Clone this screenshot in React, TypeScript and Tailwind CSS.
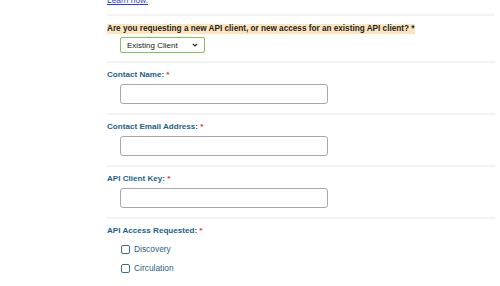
import * as React from 'react'

const font = { fontFamily: '"Liberation Sans", Arial, sans-serif' }

const Req: React.FunctionComponent = () => <span className="text-[#d33a35]"> *</span>

const TextField: React.FunctionComponent<{ label: string }> = ({ label }) => {
  return (
    <div className="border-t-2 border-[#f3f3f3] pt-[6px] pb-[9px]">
      <label className="block h-[12px] text-[8.1px] font-bold leading-[12px] text-[#225f8c]">
        {label}
        <Req />
      </label>
      <input
        type="text"
        className="mt-[3px] ml-[13px] block h-[20px] w-[208px] rounded-[3px] border-[1.5px] border-[#a8a8a8] bg-white px-1 text-[8px] outline-none"
      />
    </div>
  )
}

const Check: React.FunctionComponent<{ label: string }> = ({ label }) => {
  return (
    <label className="ml-[14px] flex h-[12px] items-center gap-[4px] text-[8.4px] leading-[12px] text-[#2b5f86]">
      <span className="block h-[9px] w-[9px] rounded-[2px] border-[1.5px] border-[#3d6d93] bg-white" />
      {label}
    </label>
  )
}

export default function App() {
  return (
    <div className="h-[286px] w-[500px] overflow-hidden bg-white" style={font}>
      <div className="ml-[107px] w-[388px]">
        <div className="h-[14px] overflow-hidden">
          <a href="#" className="block -translate-y-[5px] text-[8.4px] leading-[10px] text-[#2f3fd0] underline">
            Learn how.
          </a>
        </div>

        <div className="border-t-2 border-[#f3f3f3] pt-[8px] pb-[8px]">
          <div className="flex h-[10px] text-[8.2px] leading-[10px]">
            <span className="block h-[10px] bg-[#fde4bd] pr-[1px] font-bold text-[#1e1e1e]">
              Are you requesting a new API client, or new access for an existing API client? *
            </span>
          </div>
          <div className="relative mt-[3px] ml-[13px] h-[16px] w-[85px]">
            <select
              defaultValue="existing"
              className="block h-[16px] w-[85px] appearance-none rounded-[2px] border-[1.5px] border-[#7ec35b] bg-white pl-[6px] text-[8px] leading-[13px] text-[#222] outline-none"
            >
              <option value="new">New Client</option>
              <option value="existing">Existing Client</option>
            </select>
            <svg
              className="pointer-events-none absolute top-[6px] right-[7px]"
              width="6"
              height="4"
              viewBox="0 0 6 4"
              fill="none"
            >
              <path d="M0.8 0.8 L3 3 L5.2 0.8" stroke="#222" strokeWidth="1.2" />
            </svg>
          </div>
        </div>

        <TextField label="Contact Name:" />
        <TextField label="Contact Email Address:" />
        <TextField label="API Client Key:" />

        <div className="border-t-2 border-[#f3f3f3] pt-[6px]">
          <div className="h-[12px] text-[8.1px] font-bold leading-[12px] text-[#225f8c]">
            API Access Requested:
            <Req />
          </div>
          <div className="mt-[6px] flex flex-col gap-[7px]">
            <Check label="Discovery" />
            <Check label="Circulation" />
          </div>
        </div>
      </div>
    </div>
  )
}
